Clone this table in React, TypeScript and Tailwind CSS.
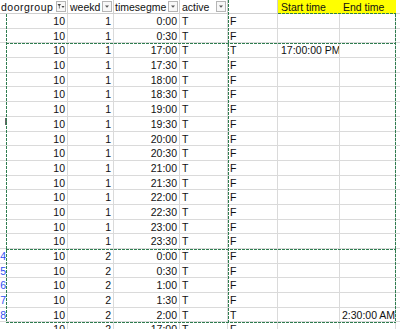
import React from 'react';

type Row = { w: number; t: string; a: string; e: string; start?: string; end?: string; num?: string };

const rows: Row[] = [
  { w: 1, t: '0:00', a: 'T', e: 'F' },
  { w: 1, t: '0:30', a: 'T', e: 'F' },
  { w: 1, t: '17:00', a: 'T', e: 'T', start: '17:00:00 PM' },
  { w: 1, t: '17:30', a: 'T', e: 'F' },
  { w: 1, t: '18:00', a: 'T', e: 'F' },
  { w: 1, t: '18:30', a: 'T', e: 'F' },
  { w: 1, t: '19:00', a: 'T', e: 'F' },
  { w: 1, t: '19:30', a: 'T', e: 'F' },
  { w: 1, t: '20:00', a: 'T', e: 'F' },
  { w: 1, t: '20:30', a: 'T', e: 'F' },
  { w: 1, t: '21:00', a: 'T', e: 'F' },
  { w: 1, t: '21:30', a: 'T', e: 'F' },
  { w: 1, t: '22:00', a: 'T', e: 'F' },
  { w: 1, t: '22:30', a: 'T', e: 'F' },
  { w: 1, t: '23:00', a: 'T', e: 'F' },
  { w: 1, t: '23:30', a: 'T', e: 'F' },
  { w: 2, t: '0:00', a: 'T', e: 'F', num: '4' },
  { w: 2, t: '0:30', a: 'T', e: 'F', num: '5' },
  { w: 2, t: '1:00', a: 'T', e: 'F', num: '6' },
  { w: 2, t: '1:30', a: 'T', e: 'F', num: '7' },
  { w: 2, t: '2:00', a: 'T', e: 'T', end: '2:30:00 AM', num: '8' },
  { w: 2, t: '17:00', a: 'T', e: 'F' },
];

const cell = 'h-[14.7px] border-r border-b border-[#dadada] px-[2px] leading-[15px] whitespace-nowrap overflow-hidden';
const head = 'relative flex h-[14px] items-center justify-between border-r border-b border-[#cfcfcf] pr-[1px] leading-[14px] whitespace-nowrap';

function FilterButton({ active = false }: { active?: boolean }) {
  return (
    <div className="flex h-[11px] w-[10px] shrink-0 items-center justify-center border border-[#b5b5b5] bg-[#f7f7f7]">
      <svg width="8" height="7" viewBox="0 0 8 7">
        {active ? (
          <>
            <path d="M0.5 1 L4 1 L2.6 3 L2.6 5.5 L1.9 5.5 L1.9 3 Z" fill="#444" />
            <path d="M4.5 3 L7.5 3 L6 5 Z" fill="#444" />
          </>
        ) : (
          <path d="M2 2.5 L6 2.5 L4 4.8 Z" fill="#555" />
        )}
      </svg>
    </div>
  );
}

function Dash({ className }: { className: string }) {
  return <div className={`absolute ${className}`} />;
}

const hDash = 'h-[1px] bg-[repeating-linear-gradient(90deg,#2f7d50_0_3px,transparent_3px_4px)]';
const vDash = 'w-[1px] bg-[repeating-linear-gradient(180deg,#2f7d50_0_3px,transparent_3px_4px)]';

export default function App() {
  return (
    <div className="relative h-[329px] w-[400px] overflow-hidden bg-white text-[10.5px] text-[#111] font-['Liberation_Sans',Arial,sans-serif]">
      <div className="grid grid-cols-[6px_62px_46px_66px_48px_50px_62px_56px_20px]">
        {/* header */}
        <div className={`${head} col-span-2 pl-[1px] tracking-[0.5px]`}>
          <span>doorgroup</span>
          <FilterButton active />
        </div>
        <div className={`${head} pl-[2px]`}>
          <span>weekd</span>
          <FilterButton />
        </div>
        <div className={`${head} pl-[1px]`}>
          <span>timesegme</span>
          <FilterButton />
        </div>
        <div className={`${head} pl-[2px]`}>
          <span>active</span>
          <FilterButton />
        </div>
        <div className="h-[14px] border-r border-b border-[#cfcfcf]" />
        <div className="h-[14px] bg-[#ffff00] pl-[3px] leading-[14px]">Start time</div>
        <div className="h-[14px] bg-[#ffff00] pl-[3px] leading-[14px]">End time</div>
        <div className="h-[14px] border-b border-[#dadada]" />

        {rows.map((r, i) => (
          <React.Fragment key={i}>
            <div className="flex h-[14.7px] justify-end overflow-hidden border-b border-[#dadada] leading-[15px] text-[#2f4ff0]">
              {r.num ?? ''}
            </div>
            <div className={`${cell} text-right`}>10</div>
            <div className={`${cell} text-right`}>{r.w}</div>
            <div className={`${cell} text-right`}>{r.t}</div>
            <div className={cell}>{r.a}</div>
            <div className={cell}>{r.e}</div>
            <div className={`${cell} pl-[3px]`}>{r.start ?? ''}</div>
            <div className={`${cell} text-right`}>{r.end ?? ''}</div>
            <div className="h-[14.7px] border-b border-[#dadada]" />
          </React.Fragment>
        ))}
      </div>

      {/* selection tick */}
      <div className="absolute left-[5px] top-[118px] h-[7px] w-[2px] bg-[#666]" />

      {/* copy marquee */}
      <Dash className={`${vDash} left-[6px] top-[14px] h-[309px]`} />
      <Dash className={`${vDash} left-[228px] top-0 h-[323px]`} />
      <Dash className={`${vDash} left-[395px] top-[14px] h-[309px]`} />
      <Dash className={`${hDash} left-[278px] top-[13px] w-[118px]`} />
      <Dash className={`${hDash} left-[6px] top-[43px] w-[390px]`} />
      <Dash className={`${hDash} left-[6px] top-[249px] w-[390px]`} />
      <Dash className={`${hDash} left-[6px] top-[322px] w-[390px]`} />
    </div>
  );
}
